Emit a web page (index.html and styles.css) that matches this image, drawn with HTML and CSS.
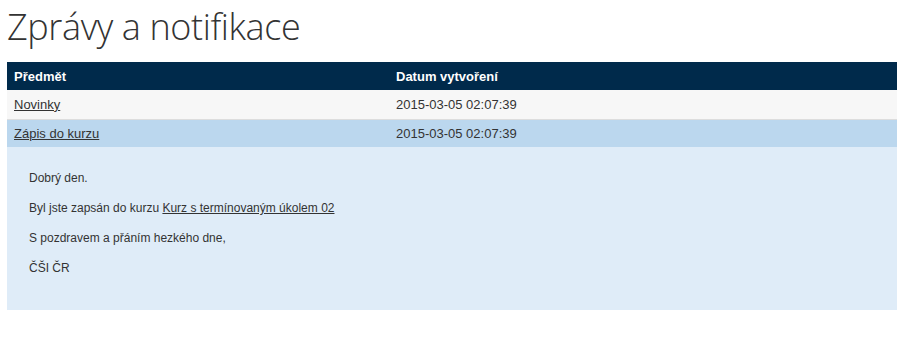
FILE: index.html
```html
<!DOCTYPE html>
<html lang="cs">
<head>
<meta charset="utf-8">
<title>Zprávy a notifikace</title>
<link rel="stylesheet" href="styles.css">
</head>
<body>
<div class="page">
  <h1 class="title">Zprávy a notifikace</h1>
  <table class="msgs">
    <thead>
      <tr class="head-row">
        <th class="col-subject">Předmět</th>
        <th class="col-date">Datum vytvoření</th>
      </tr>
    </thead>
    <tbody>
      <tr class="row row-plain">
        <td><a href="#" class="link">Novinky</a></td>
        <td>2015-03-05 02:07:39</td>
      </tr>
      <tr class="row row-active">
        <td><a href="#" class="link">Zápis do kurzu</a></td>
        <td>2015-03-05 02:07:39</td>
      </tr>
      <tr class="detail-row">
        <td colspan="2" class="detail-cell">
          <div class="detail">
            <p>Dobrý den.</p>
            <p>Byl jste zapsán do kurzu <a href="#" class="link">Kurz s termínovaným úkolem 02</a></p>
            <p>S pozdravem a přáním hezkého dne,</p>
            <p>ČŠI ČR</p>
          </div>
        </td>
      </tr>
    </tbody>
  </table>
</div>
</body>
</html>
```

FILE: styles.css
```css
html, body {
  margin: 0;
  padding: 0;
  background: #ffffff;
}
body {
  font-family: "Liberation Sans", Arial, sans-serif;
  font-size: 13px;
  color: #333333;
}
.page {
  padding: 0 18px 0 7px;
}
.title {
  margin: 0;
  padding-top: 4px;
  height: 58px;
  box-sizing: border-box;
  font-family: "Open Sans", sans-serif;
  font-weight: 300;
  font-size: 36px;
  line-height: 46px;
  color: #333333;
  letter-spacing: -0.4px;
}
.msgs {
  width: 890px;
  border-collapse: collapse;
  border-spacing: 0;
  margin-top: 4px;
}
.msgs th,
.msgs td {
  text-align: left;
  padding: 0 7px;
  vertical-align: middle;
}
.head-row {
  background: #002a4b;
  color: #ffffff;
  height: 28px;
}
.head-row th {
  font-weight: bold;
}
.col-subject {
  width: 368px;
}
.row {
  height: 29px;
}
.row-plain {
  background: #f7f7f7;
  border-bottom: 1px solid #dddddd;
}
.row-active {
  background: #bbd7ee;
  height: 28px;
}
.link {
  color: #333333;
  text-decoration: underline;
}
.detail-row {
  background: #dfecf8;
}
.msgs .detail-cell {
  padding: 0;
}
.detail {
  padding: 21px 22px 22px;
  font-size: 12px;
}
.detail p {
  margin: 0 0 10px;
  line-height: 20px;
}
```
